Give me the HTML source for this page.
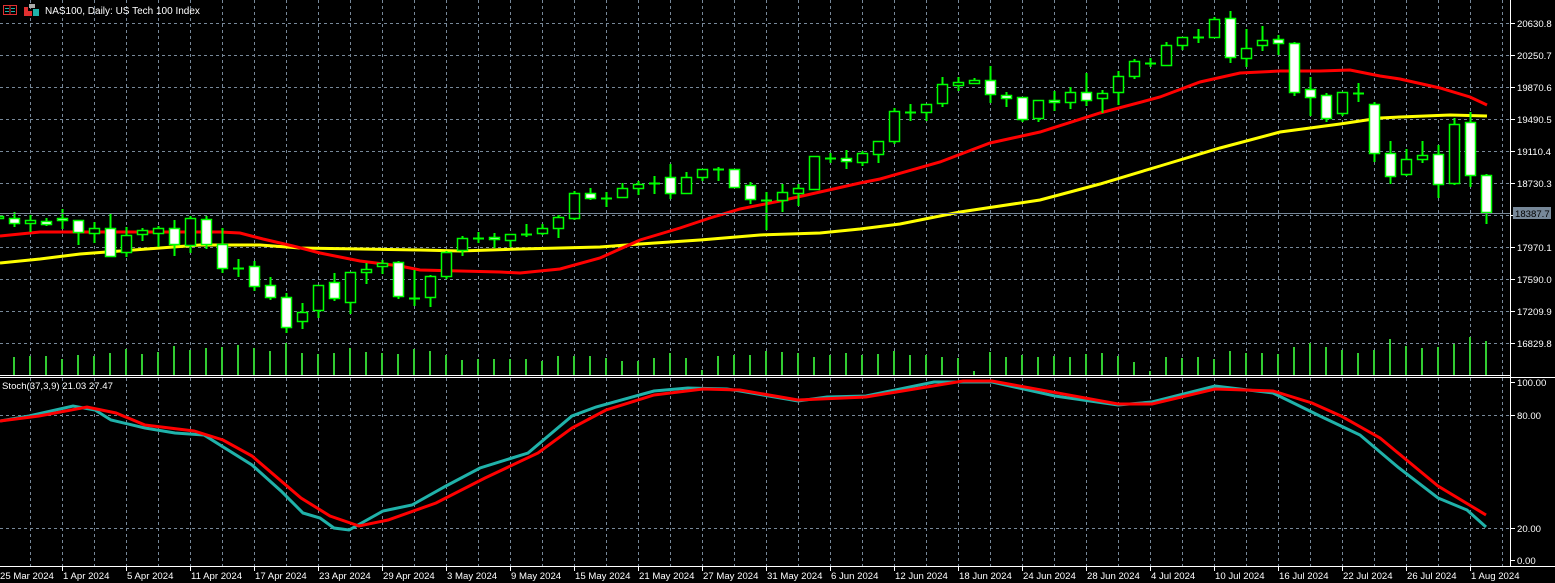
<!DOCTYPE html>
<html><head><meta charset="utf-8"><style>
html,body{margin:0;padding:0;background:#000;width:1555px;height:583px;overflow:hidden}
svg{display:block}
text{font-family:"Liberation Sans","DejaVu Sans",sans-serif;font-size:9.6px;fill:#fff}
</style></head><body>
<svg id="s" width="1555" height="583" viewBox="0 0 1555 583" xmlns="http://www.w3.org/2000/svg">
<rect width="1555" height="583" fill="#000"/>
<g id="grid" stroke="#778899" stroke-width="1" stroke-dasharray="3,3"></g>
<g id="vol" stroke="#32cd32" stroke-width="2"></g>
<polyline fill="none" stroke="#ffff00" stroke-width="3" points="0,263 40,259 80,254 120,251 160,248 200,245 260,245 300,248 360,249 420,250 460,251 520,249 600,247 640,244 700,240 760,235 820,233 860,229 900,224 960,212 1040,200 1100,184 1160,166 1220,148 1280,132 1340,124 1380,118 1400,117 1450,115 1487,116"/>
<polyline fill="none" stroke="#ff0000" stroke-width="3" points="0,236 40,232 62,232 220,232 240,233 263,239 293,246 320,253 360,261 400,266 420,270 460,271 500,272 520,273 560,269 600,258 640,240 680,228 710,218 740,209 780,201 820,192 860,183 880,179 940,162 990,143 1040,132 1100,113 1160,97 1200,82 1240,73 1280,71 1320,71 1350,70 1380,76 1400,79 1440,88 1470,97 1487,105"/>
<g id="cand"></g>
<line x1="0" y1="213.5" x2="1510" y2="213.5" stroke="#778899" stroke-width="1"/>
<polyline fill="none" stroke="#20b2aa" stroke-width="3" points="0,421 29,416 73,406 95,410 111,420 145,428 175,433 204,435 252,465 281,491 303,513 320,518 334,528 349,530 383,511 412,505 446,486 480,468 528,453 572,416 596,407 654,391 688,388 727,389 740,391 798,401 827,397 866,396 934,382 992,382 1055,396 1118,405 1152,402 1215,386 1273,393 1322,417 1360,435 1399,468 1438,498 1467,510 1486,527"/>
<polyline fill="none" stroke="#ff0000" stroke-width="3" points="0,421 39,416 87,407 116,413 145,425 194,431 223,440 252,456 301,498 330,516 359,526 388,520 436,503 485,478 538,453 572,428 606,410 654,395 703,389 740,390 798,400 866,397 963,381 992,381 1118,404 1152,404 1215,389 1273,391 1312,403 1341,416 1380,438 1438,486 1486,515"/>
<line x1="1510.5" y1="0" x2="1510.5" y2="566" stroke="#fff"/>
<line x1="0" y1="375.5" x2="1510" y2="375.5" stroke="#fff"/>
<line x1="0" y1="377.5" x2="1555" y2="377.5" stroke="#fff"/>
<line x1="0" y1="566.5" x2="1555" y2="566.5" stroke="#fff"/>
<g id="ticks" stroke="#fff"></g>
<rect x="3.5" y="5.5" width="13" height="9" fill="none" stroke="#e03030"/>
<line x1="10" y1="6" x2="10" y2="14" stroke="#e03030"/>
<line x1="5" y1="8.5" x2="9" y2="8.5" stroke="#20b2aa"/><line x1="11" y1="8.5" x2="15" y2="8.5" stroke="#20b2aa"/>
<line x1="5" y1="11.5" x2="9" y2="11.5" stroke="#20b2aa"/><line x1="11" y1="11.5" x2="15" y2="11.5" stroke="#20b2aa"/>
<rect x="24" y="7" width="4" height="9" fill="#e03030"/><rect x="28" y="11" width="4" height="5" fill="#e03030"/>
<rect x="29" y="4" width="6" height="4" fill="#aaa"/><rect x="33" y="9" width="6" height="7" fill="#20b2aa"/>
<text x="45" y="14" style="font-size:10px">NAS100, Daily:  US Tech 100 Index</text>
<text x="2" y="389" style="font-size:9.6px">Stoch(37,3,9) 21.03 27.47</text>
<g>
<text x="1517" y="27">20630.8</text>
<text x="1517" y="59">20250.7</text>
<text x="1517" y="91">19870.6</text>
<text x="1517" y="123">19490.5</text>
<text x="1517" y="155">19110.4</text>
<text x="1517" y="187">18730.3</text>
<text x="1517" y="251">17970.1</text>
<text x="1517" y="283">17590.0</text>
<text x="1517" y="315">17209.9</text>
<text x="1517" y="347">16829.8</text>
<rect x="1513" y="207" width="38" height="12" fill="#778899"/>
<text x="1515" y="217" style="fill:#000">18387.7</text>
<text x="1517" y="386">100.00</text>
<text x="1517" y="419">80.00</text>
<text x="1517" y="532">20.00</text>
<text x="1517" y="564">0.00</text>
</g>
<g>
<text x="0" y="579">25 Mar 2024</text>
<text x="63" y="579">1 Apr 2024</text>
<text x="127" y="579">5 Apr 2024</text>
<text x="191" y="579">11 Apr 2024</text>
<text x="255" y="579">17 Apr 2024</text>
<text x="319" y="579">23 Apr 2024</text>
<text x="383" y="579">29 Apr 2024</text>
<text x="447" y="579">3 May 2024</text>
<text x="511" y="579">9 May 2024</text>
<text x="575" y="579">15 May 2024</text>
<text x="639" y="579">21 May 2024</text>
<text x="703" y="579">27 May 2024</text>
<text x="767" y="579">31 May 2024</text>
<text x="831" y="579">6 Jun 2024</text>
<text x="895" y="579">12 Jun 2024</text>
<text x="959" y="579">18 Jun 2024</text>
<text x="1023" y="579">24 Jun 2024</text>
<text x="1087" y="579">28 Jun 2024</text>
<text x="1151" y="579">4 Jul 2024</text>
<text x="1215" y="579">10 Jul 2024</text>
<text x="1279" y="579">16 Jul 2024</text>
<text x="1343" y="579">22 Jul 2024</text>
<text x="1407" y="579">26 Jul 2024</text>
<text x="1471" y="579">1 Aug 2024</text>
</g>
</svg>
<script>
var NS="http://www.w3.org/2000/svg";
function el(p,t,a){var e=document.createElementNS(NS,t);for(var k in a)e.setAttribute(k,a[k]);document.getElementById(p).appendChild(e);return e;}
for(var x=30;x<1510;x+=32){el("grid","line",{x1:x+.5,y1:0,x2:x+.5,y2:375});el("grid","line",{x1:x+.5,y1:378,x2:x+.5,y2:566});}
[23,55,87,119,151,183,215,247,279,311,343].forEach(function(y){el("grid","line",{x1:0,y1:y+.5,x2:1510,y2:y+.5});});
[415,528].forEach(function(y){el("grid","line",{x1:0,y1:y+.5,x2:1510,y2:y+.5});});
[23,55,87,119,151,183,215,247,279,311,343,382,415,528,560].forEach(function(y){el("ticks","line",{x1:1511,y1:y+.5,x2:1515,y2:y+.5});});
for(var x=62;x<1510;x+=64){el("ticks","line",{x1:x+.5,y1:566,x2:x+.5,y2:571});}
var V=[356,357,356,356,359,355,356,353,349,354,352,346,350,348,347,345,348,351,343,353,354,353,348,352,353,354,349,351,355,360,359,359,359,359,361,356,356,356,358,361,361,358,353,358,370,356,355,355,351,352,353,357,355,353,355,354,351,355,355,357,358,371,352,357,355,357,356,357,354,353,356,362,371,357,358,357,359,351,353,353,354,347,343,347,350,353,350,339,346,348,347,344,337,341];
V.forEach(function(t,k){var x=-2+16*k;el("vol","line",{x1:x,y1:375,x2:x,y2:t});});
var C=[[214,220,216,218,'h'],[212,227,218,223,'w'],[215,232,220,223,'h'],[218,226,221,224,'w'],[209,229,218,220,'w'],[220,245,220,232,'w'],[222,243,228,233,'h'],[213,257,228,256,'w'],[227,257,235,252,'h'],[228,241,230,234,'h'],[226,247,228,233,'h'],[220,256,228,244,'w'],[216,253,218,245,'h'],[216,249,219,244,'w'],[228,273,244,268,'w'],[259,277,268,268,'c'],[261,291,266,286,'w'],[277,300,285,297,'w'],[293,333,297,327,'w'],[303,329,312,321,'h'],[285,318,285,310,'h'],[273,301,282,298,'w'],[272,314,272,302,'h'],[263,284,269,272,'h'],[260,274,263,266,'h'],[261,299,262,296,'w'],[270,306,298,298,'c'],[275,307,276,297,'h'],[251,279,252,276,'h'],[236,256,238,250,'h'],[232,243,238,238,'c'],[233,248,237,239,'w'],[234,247,234,240,'h'],[224,237,234,234,'c'],[224,235,228,233,'h'],[215,238,217,228,'h'],[191,220,193,218,'h'],[188,200,193,198,'w'],[192,207,198,198,'c'],[183,197,188,197,'h'],[181,195,184,188,'h'],[176,194,183,183,'c'],[164,199,177,193,'w'],[172,194,177,193,'h'],[169,181,169,177,'h'],[167,181,169,169,'c'],[169,188,169,187,'w'],[182,204,185,199,'w'],[192,230,200,200,'c'],[184,212,192,200,'h'],[184,206,188,193,'h'],[156,190,156,189,'h'],[153,163,158,158,'c'],[150,169,158,161,'w'],[151,166,153,162,'h'],[141,163,141,154,'h'],[108,144,111,141,'h'],[104,121,112,112,'c'],[104,121,104,112,'h'],[77,107,84,103,'h'],[77,91,82,85,'h'],[78,83,80,83,'h'],[66,103,80,94,'w'],[92,107,95,98,'w'],[97,122,97,119,'w'],[100,122,100,118,'h'],[91,111,100,102,'w'],[87,109,92,102,'h'],[73,106,92,100,'w'],[90,113,93,98,'h'],[71,105,76,92,'h'],[59,79,61,76,'h'],[58,67,63,63,'c'],[42,65,45,65,'h'],[37,50,37,45,'h'],[29,43,37,37,'c'],[17,37,19,37,'h'],[11,63,18,57,'w'],[29,67,48,58,'h'],[26,51,40,45,'h'],[35,55,39,43,'w'],[42,96,43,92,'w'],[77,116,89,97,'w'],[93,122,95,118,'w'],[92,116,92,113,'h'],[83,102,93,93,'c'],[102,162,104,153,'w'],[141,184,153,176,'w'],[149,176,159,174,'h'],[141,163,155,159,'h'],[145,198,154,184,'w'],[118,185,124,183,'h'],[112,187,122,175,'w'],[174,224,175,212,'w']];
C.forEach(function(c,k){var x=-2+16*k+.5;
 el("cand","line",{x1:x,y1:c[0],x2:x,y2:c[1],stroke:"#00ff00","stroke-width":2});
 if(c[4]=='c'){el("cand","line",{x1:x-5.5,y1:c[2]+.5,x2:x+5.5,y2:c[2]+.5,stroke:"#00ff00","stroke-width":2});}
 else{var h=Math.max(c[3]-c[2],2);el("cand","rect",{x:x-5,y:c[2]+.5,width:10,height:h,fill:c[4]=='w'?"#fff":"#000",stroke:"#00ff00","stroke-width":1.5});}
});
</script>
</body></html>
